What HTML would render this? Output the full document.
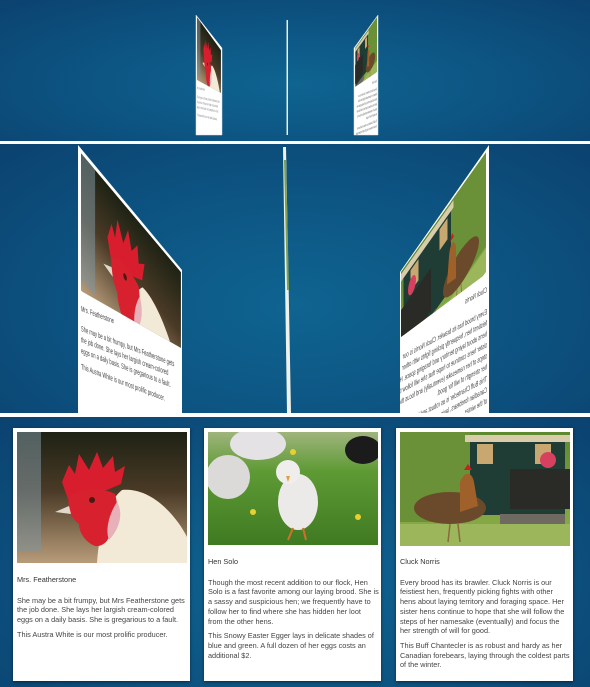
<!DOCTYPE html>
<html><head><meta charset="utf-8">
<style>
html,body{margin:0;padding:0;width:590px;height:687px;overflow:hidden;background:#fff;font-family:"Liberation Sans",sans-serif}
.abs{position:absolute}
.bg{background:radial-gradient(ellipse at 50% 60%,#0f6490 0%,#0d5684 45%,#0b4270 100%)}
.card{position:absolute;background:#fff;box-shadow:0 1px 3px rgba(0,0,0,.5)}
.card svg{position:absolute;left:4px;top:4px}
.txt{position:absolute;left:4px;right:0;font-size:7.3px;line-height:9.7px;color:#444;white-space:nowrap}
.txt p{margin:0 0 5px 0}
.txt .t{color:#333;margin-bottom:11px}
</style></head><body>
<svg width="0" height="0" style="position:absolute">
<defs>
<linearGradient id="rbg" x1="0" y1="0" x2="0" y2="1"><stop offset="0" stop-color="#1e2214"/><stop offset="0.45" stop-color="#4a3a26"/><stop offset="1" stop-color="#b89c7a"/></linearGradient>
<linearGradient id="gr" x1="0" y1="0" x2="0" y2="1"><stop offset="0" stop-color="#9fb47c"/><stop offset="0.35" stop-color="#5e9a34"/><stop offset="1" stop-color="#3f7a22"/></linearGradient>
<linearGradient id="tr" x1="0" y1="0" x2="0" y2="1"><stop offset="0" stop-color="#5d8a2e"/><stop offset="1" stop-color="#8fb04a"/></linearGradient>
<symbol id="rooster" viewBox="0 0 170 131">
<rect width="170" height="131" fill="url(#rbg)"/>
<rect x="0" y="0" width="24" height="120" fill="#7e95a0" opacity=".55"/>
<path d="M80 131 C82 100 90 70 105 58 C135 55 160 85 170 105 L170 131Z" fill="#f2ead6"/>
<path d="M45 50 L52 33 L58 42 L62 22 L72 38 L80 20 L86 36 L96 24 L98 40 L108 34 L104 52 L90 58 L66 62 L52 70Z" fill="#d81e2e"/>
<path d="M52 66 C62 55 85 55 98 62 C102 75 100 88 92 96 C95 105 88 115 78 114 C68 110 62 100 62 92 C54 86 50 76 52 66Z" fill="#d8212f"/>
<path d="M52 74 L38 80 L54 82Z" fill="#e0d8c8"/>
<circle cx="75" cy="68" r="3" fill="#4a1a10"/>
<path d="M100 70 C106 80 104 95 92 108 C88 98 92 82 100 70Z" fill="#e8b0b8"/>
</symbol>
<symbol id="chicks" viewBox="0 0 170 113">
<rect width="170" height="113" fill="url(#gr)"/>
<ellipse cx="50" cy="12" rx="28" ry="16" fill="#e4e2e4"/>
<ellipse cx="20" cy="45" rx="22" ry="22" fill="#dcdad8"/>
<ellipse cx="90" cy="70" rx="20" ry="28" fill="#eceae8"/>
<circle cx="80" cy="40" r="12" fill="#f0eeec"/>
<path d="M78 44 L82 44 L80 50Z" fill="#e0a040"/>
<ellipse cx="155" cy="18" rx="18" ry="14" fill="#1b1b1b"/>
<circle cx="85" cy="20" r="3" fill="#e8d030"/><circle cx="45" cy="80" r="3" fill="#e8d030"/><circle cx="150" cy="85" r="3" fill="#e8d030"/>
<path d="M85 96 L80 108 M95 96 L98 108" stroke="#d0702a" stroke-width="2"/>
</symbol>
<symbol id="shed" viewBox="0 0 170 114">
<rect width="170" height="114" fill="url(#tr)"/>
<rect x="0" y="0" width="70" height="90" fill="#6a9038"/>
<rect x="70" y="3" width="95" height="80" fill="#1f3d34"/>
<path d="M65 3 L170 3 L170 10 L65 10Z" fill="#d8ccaa"/>
<rect x="77" y="12" width="16" height="20" fill="#c8a870"/>
<rect x="135" y="12" width="16" height="20" fill="#c8a870"/>
<rect x="110" y="37" width="60" height="40" fill="#2a2a26"/>
<circle cx="148" cy="28" r="8" fill="#d84060"/>
<rect x="100" y="82" width="65" height="22" fill="#6e6a62"/>
<rect x="0" y="92" width="170" height="22" fill="#9cb65c"/>
<ellipse cx="50" cy="76" rx="36" ry="16" fill="#6a4a2a"/>
<path d="M60 50 C65 38 72 40 74 50 L78 74 L60 80Z" fill="#a0602a"/>
<path d="M64 38 L68 32 L72 38Z" fill="#c82020"/>
<path d="M50 92 L48 110 M58 92 L60 110" stroke="#8a6a3a" stroke-width="1.5"/>
</symbol>
</defs>
</svg>

<div class="abs bg" style="left:0;top:0;width:590px;height:141px"></div>
<div class="abs" style="left:0;top:141px;width:590px;height:3px;background:#fff"></div>
<div class="abs bg" style="left:0;top:144px;width:590px;height:269px"></div>
<div class="abs" style="left:0;top:413px;width:590px;height:4px;background:#fff"></div>

<svg class="abs" style="left:0;top:0" width="590" height="417" viewBox="0 0 590 417" font-family="Liberation Sans, sans-serif">
<defs>
<clipPath id="c1"><polygon points="197,17 221,50 221,93 197,80"/></clipPath>
<clipPath id="c2"><polygon points="377,17 355,48 355,87 377,72"/></clipPath>
<clipPath id="c3"><polygon points="81,153 181,272 181,348 81,291"/></clipPath>
<clipPath id="c4"><polygon points="487,151 401,272 401,337 487,273"/></clipPath>
<clipPath id="c5"><polygon points="400,272 489,145 489,413 400,413"/></clipPath>
</defs>
<polygon points="196,15 222,48 222,135 196,135" fill="#fff" stroke="#dde" stroke-width=".5"/>
<g clip-path="url(#c1)"><use href="#rooster" width="170" height="131" transform="matrix(0.141,0.194,0,0.48,197,17)"/></g>
<g fill="#777" font-size="7">
<text transform="matrix(0.14,0.03,0,0.5,197,89)">Mrs. Featherstone</text>
<text transform="matrix(0.14,0.03,0,0.5,197,98)">She may be a bit frumpy, but Mrs Featherstone gets</text>
<text transform="matrix(0.14,0.03,0,0.5,197,103)">the job done. She lays her largish cream-colored</text>
<text transform="matrix(0.14,0.03,0,0.5,197,108)">eggs on a daily basis. She is gregarious to a fault.</text>
<text transform="matrix(0.14,0.03,0,0.5,197,116)">This Austra White is our most prolific producer.</text>
</g>
<rect x="286.5" y="20" width="1.5" height="115" fill="#e8f0e0"/>
<polygon points="378,15 378,135 354,135 354,48" fill="#fff" stroke="#dde" stroke-width=".5"/>
<g clip-path="url(#c2)"><use href="#shed" width="170" height="114" transform="matrix(-0.129,0.18,0,0.48,377,17)"/></g>
<g fill="#555" font-size="7">
<text transform="matrix(-0.13,0.05,0,0.5,377,82)">Cluck Norris</text>
<text transform="matrix(-0.13,0.05,0,0.5,377,90)">Every brood has its brawler. Cluck Norris is our</text>
<text transform="matrix(-0.13,0.05,0,0.5,377,95)">feistiest hen, frequently picking fights with other</text>
<text transform="matrix(-0.13,0.05,0,0.5,377,100)">hens about laying territory and foraging space. Her</text>
<text transform="matrix(-0.13,0.05,0,0.5,377,105)">sister hens continue to hope that she will follow the</text>
<text transform="matrix(-0.13,0.05,0,0.5,377,110)">steps of her namesake (eventually) and focus the</text>
<text transform="matrix(-0.13,0.05,0,0.5,377,115)">her strength of will for good.</text>
<text transform="matrix(-0.13,0.05,0,0.5,377,122)">This Buff Chantecler is as robust and hardy as her</text>
<text transform="matrix(-0.13,0.05,0,0.5,377,127)">Canadian forebears, laying through the coldest parts</text>
</g>

<polygon points="78,145 182,270 182,413 78,413" fill="#fff"/>
<g clip-path="url(#c3)"><use href="#rooster" width="170" height="131" transform="matrix(0.588,0.7,0,1.05,81,153)"/></g>
<g fill="#444" font-size="7">
<text transform="matrix(0.58,0.22,0,1.1,81,311)">Mrs. Featherstone</text>
<text transform="matrix(0.58,0.22,0,1.1,81,331)">She may be a bit frumpy, but Mrs Featherstone gets</text>
<text transform="matrix(0.58,0.22,0,1.1,81,342)">the job done. She lays her largish cream-colored</text>
<text transform="matrix(0.58,0.22,0,1.1,81,353)">eggs on a daily basis. She is gregarious to a fault.</text>
<text transform="matrix(0.58,0.22,0,1.1,81,369)">This Austra White is our most prolific producer.</text>
</g>
<polygon points="283,147 286,147 291,413 287,413" fill="#eef2ea"/>
<polygon points="284,160 286,160 289,290 287,290" fill="#7fa050"/>
<polygon points="489,145 489,413 400,413 400,272" fill="#fff"/>
<g clip-path="url(#c4)"><use href="#shed" width="170" height="114" transform="matrix(-0.5,0.706,0,1.06,486,151)"/></g>
<g fill="#444" font-size="7" clip-path="url(#c5)">
<text transform="matrix(-0.58,0.31,0,1.1,487,292)">Cluck Norris</text>
<text transform="matrix(-0.58,0.31,0,1.1,487,314)">Every brood has its brawler. Cluck Norris is our</text>
<text transform="matrix(-0.58,0.31,0,1.1,487,325)">feistiest hen, frequently picking fights with other</text>
<text transform="matrix(-0.58,0.31,0,1.1,487,336)">hens about laying territory and foraging space. Her</text>
<text transform="matrix(-0.58,0.31,0,1.1,487,347)">sister hens continue to hope that she will follow the</text>
<text transform="matrix(-0.58,0.31,0,1.1,487,358)">steps of her namesake (eventually) and focus the</text>
<text transform="matrix(-0.58,0.31,0,1.1,487,369)">her strength of will for good.</text>
<text transform="matrix(-0.58,0.31,0,1.1,487,381)">This Buff Chantecler is as robust and hardy as her</text>
<text transform="matrix(-0.58,0.31,0,1.1,487,392)">Canadian forebears, laying through the coldest parts</text>
<text transform="matrix(-0.58,0.31,0,1.1,487,403)">of the winter.</text>
</g>
</svg>

<div class="abs bg" style="left:0;top:417px;width:590px;height:270px"></div>

<div class="card" style="left:13px;top:428px;width:177px;height:253px">
<svg width="170" height="131"><use href="#rooster" width="170" height="131"/></svg>
<div class="txt" style="top:147px">
<p class="t">Mrs. Featherstone</p>
<p>She may be a bit frumpy, but Mrs Featherstone gets<br>the job done. She lays her largish cream-colored<br>eggs on a daily basis. She is gregarious to a fault.</p>
<p>This Austra White is our most prolific producer.</p>
</div></div>

<div class="card" style="left:204px;top:428px;width:177px;height:253px">
<svg width="170" height="113"><use href="#chicks" width="170" height="113"/></svg>
<div class="txt" style="top:129px">
<p class="t">Hen Solo</p>
<p>Though the most recent addition to our flock, Hen<br>Solo is a fast favorite among our laying brood. She is<br>a sassy and suspicious hen; we frequently have to<br>follow her to find where she has hidden her loot<br>from the other hens.</p>
<p>This Snowy Easter Egger lays in delicate shades of<br>blue and green. A full dozen of her eggs costs an<br>additional $2.</p>
</div></div>

<div class="card" style="left:396px;top:428px;width:177px;height:253px">
<svg width="170" height="114"><use href="#shed" width="170" height="114"/></svg>
<div class="txt" style="top:129px">
<p class="t">Cluck Norris</p>
<p>Every brood has its brawler. Cluck Norris is our<br>feistiest hen, frequently picking fights with other<br>hens about laying territory and foraging space. Her<br>sister hens continue to hope that she will follow the<br>steps of her namesake (eventually) and focus the<br>her strength of will for good.</p>
<p>This Buff Chantecler is as robust and hardy as her<br>Canadian forebears, laying through the coldest parts<br>of the winter.</p>
</div></div>
</body></html>
